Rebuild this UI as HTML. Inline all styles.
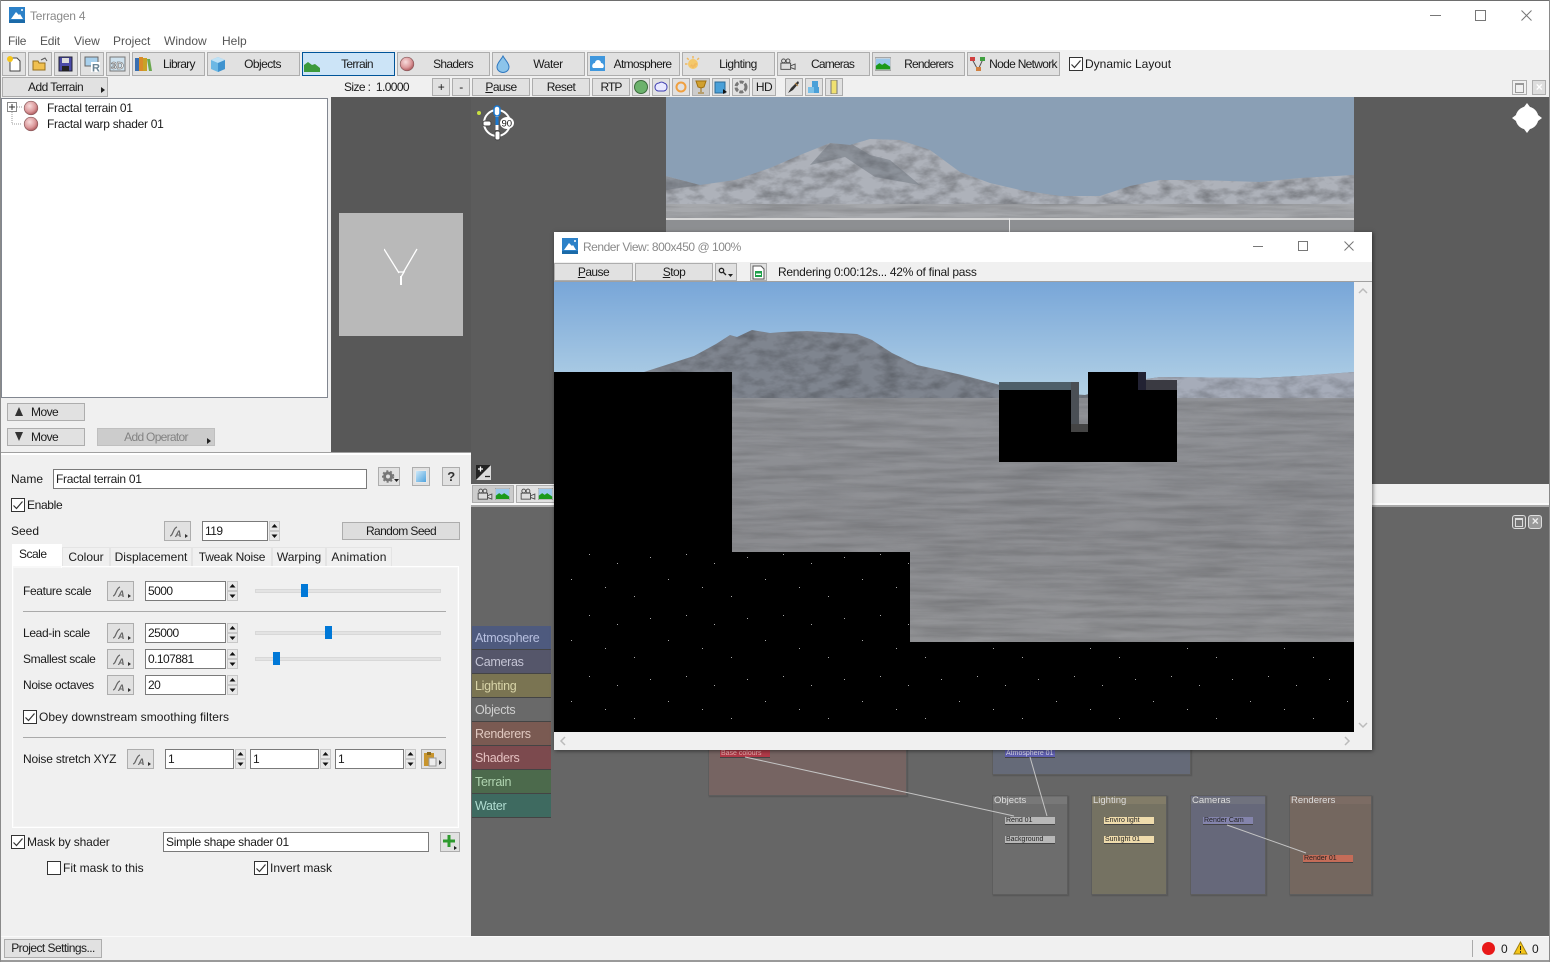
<!DOCTYPE html>
<html><head><meta charset="utf-8"><style>
html,body{margin:0;padding:0;width:1550px;height:962px;overflow:hidden;background:#f0f0f0}
body{position:relative;font-family:"Liberation Sans",sans-serif;font-size:12px;color:#1a1a1a}
div,span,svg{position:absolute}
u{position:static}
.t{white-space:nowrap;line-height:16px}
.lb{letter-spacing:-.35px}
.m{color:#555}
.b{box-sizing:border-box;background:#e1e1e1;border:1px solid #adadad;text-align:center;white-space:nowrap;overflow:hidden;letter-spacing:-.55px}
.i{box-sizing:border-box;background:#fff;border:1px solid #7a7a7a;padding:0 2px;line-height:18px;white-space:nowrap;letter-spacing:-.55px}
.c{box-sizing:border-box;width:14px;height:14px;background:#fff;border:1px solid #333}
.sl{height:4px;background:#e3e3e3;border:1px solid #d8d8d8;box-sizing:border-box}
.th{width:7px;height:13px;background:#0078d7}
.tab{box-sizing:border-box;top:547px;height:20px;background:#f0f0f0;border:1px solid #e4e4e4;border-bottom:0;text-align:center;line-height:18px}
.nl{left:472px;width:79px;height:24px;line-height:24px;font-size:12.5px;text-indent:3px;letter-spacing:-.3px;box-shadow:inset 0 -1px 0 #444}
.g{box-sizing:border-box;border:1px solid #5d5d5d;box-shadow:1px 1px 1px #555}
.gt{left:0;right:0;top:0;height:7px;color:#ddd;font-size:9.5px;line-height:7px;text-indent:1px}
.n{height:7px;width:50px;font-size:7px;line-height:7px;color:#222;text-indent:1px;box-shadow:0 1px 0 #444;white-space:nowrap;overflow:hidden}
</style></head><body>
<svg width="0" height="0" style="left:0;top:0">
<defs>
<radialGradient id="pk" cx=".4" cy=".35" r=".7"><stop offset="0" stop-color="#f8dcdc"/><stop offset=".6" stop-color="#dc9a9c"/><stop offset="1" stop-color="#a85055"/></radialGradient>
<linearGradient id="ic" x1="0" y1="0" x2="1" y2="1"><stop offset="0" stop-color="#d4ecfa"/><stop offset="1" stop-color="#4aa0dc"/></linearGradient>
<symbol id="sp" viewBox="0 0 16 16"><circle cx="8" cy="8" r="6.800" fill="url(#pk)" stroke="#8a5a5c" stroke-width=".7"/></symbol>
<symbol id="fa" viewBox="0 0 27 20"><path d="M6 15c3 0 3-8 7-9" fill="none" stroke="#666" stroke-width="1.200"/><text x="11" y="16" font-family="Liberation Sans" font-size="9" font-style="italic" font-weight="bold" fill="#666">A</text><path d="M21 13l3 2-3 2z" fill="#333"/></symbol>
<symbol id="spn" viewBox="0 0 11 20"><rect x=".5" y=".5" width="10" height="9" fill="#e8e8e8" stroke="#c8c8c8"/><rect x=".5" y="10.500" width="10" height="9" fill="#e8e8e8" stroke="#c8c8c8"/><path d="M5.500 3l3 3.500h-6zM5.500 17l3-3.500h-6z" fill="#111"/></symbol>
<symbol id="chk" viewBox="0 0 14 14"><path d="M2.500 7.500l3 3 6-7" fill="none" stroke="#333" stroke-width="1.200"/></symbol>
<symbol id="land" viewBox="0 0 18 14"><rect width="18" height="14" fill="#fff" stroke="#888"/><rect x="1" y="1" width="16" height="12" fill="#9cc9ec"/><path d="M1 13V9l4-3 3 2 3-2 6 4v3z" fill="#1b9a1b"/></symbol>
<symbol id="cam" viewBox="0 0 18 14"><rect x="1" y="6" width="11" height="7" fill="#ddd" stroke="#444"/><circle cx="4" cy="3.500" r="2.200" fill="#ddd" stroke="#444"/><circle cx="9" cy="3.500" r="2.200" fill="#ddd" stroke="#444"/><path d="M12 9l5-2v6l-5-2z" fill="#ddd" stroke="#444"/></symbol>
<symbol id="logo" viewBox="0 0 16 16"><rect width="16" height="16" fill="#2c81c8"/><path d="M2 12l5-7 3 3 1-1 3 5z" fill="#fff"/><circle cx="13" cy="3" r="1" fill="#fff"/><rect y="13" width="16" height="3" fill="#1b6aa8"/></symbol>
<filter id="nz" x="0" y="0" width="100%" height="100%"><feTurbulence type="fractalNoise" baseFrequency="0.012 0.16" numOctaves="5" seed="5"/><feColorMatrix values="0 0 0 0 0 0 0 0 0 0 0 0 0 0 0 1.800 0 0 0 -.6"/></filter>
<filter id="nm" x="0" y="0" width="100%" height="100%"><feTurbulence type="fractalNoise" baseFrequency="0.05 0.1" numOctaves="4" seed="9"/><feColorMatrix values="0 0 0 0 0 0 0 0 0 0 0 0 0 0 0 2.200 0 0 0 -.85"/></filter>
<filter id="nw" x="0" y="0" width="100%" height="100%"><feTurbulence type="fractalNoise" baseFrequency="0.02 0.08" numOctaves="4" seed="3"/><feColorMatrix values="0 0 0 0 1 0 0 0 0 1 0 0 0 0 1 2 0 0 0 -.8"/></filter>
<linearGradient id="sky" x1="0" y1="0" x2="0" y2="1"><stop offset="0" stop-color="#78a6d8"/><stop offset="1" stop-color="#bcd8e8"/></linearGradient>
<linearGradient id="gr" x1="0" y1="0" x2="0" y2="1"><stop offset="0" stop-color="#8f9196"/><stop offset=".4" stop-color="#8b8c90"/><stop offset="1" stop-color="#949597"/></linearGradient>
<pattern id="st" width="97" height="61" patternUnits="userSpaceOnUse"><g fill="#a8a8a8"><rect x="7" y="5" width="1" height="1"/><rect x="35" y="14" width="1" height="1"/><rect x="68" y="8" width="1" height="1"/><rect x="86" y="30" width="1" height="1"/><rect x="23" y="38" width="1" height="1"/><rect x="52" y="47" width="1" height="1"/></g></pattern>
<clipPath id="mt"><path d="M554 372L614 376 644 372 669 364 694 356 716 344 730 335 737 337 752 330 770 333 782 332 807 331 857 334 872 340 892 353 917 365 962 375 1000 385 1040 392 1085 395 1140 380 1160 377 1260 378 1300 376 1354 372V410H554z"/></clipPath>
<clipPath id="mtp"><path d="M666 176L700 185 735 180 770 168 800 155 830 143 850 145 870 139 900 140 930 150 960 172 990 183 1020 190 1060 196 1100 196 1130 186 1160 180 1200 180 1260 182 1300 178 1354 175V218H666z"/></clipPath>
</defs></svg>

<!-- title & menu -->
<div style="left:0;top:0;width:1550px;height:50px;background:#fff"></div>
<svg style="left:9px;top:7px" width="16" height="16"><use href="#logo"/></svg>
<div class="t" style="left:30px;top:8px;color:#8a8a8a;letter-spacing:-.2px">Terragen 4</div>
<div class="t m" style="left:8px;top:33px;letter-spacing:-.3px">File</div>
<div class="t m" style="left:40px;top:33px;letter-spacing:-.2px">Edit</div>
<div class="t m" style="left:74px;top:33px">View</div>
<div class="t m" style="left:113px;top:33px">Project</div>
<div class="t m" style="left:164px;top:33px">Window</div>
<div class="t m" style="left:222px;top:33px">Help</div>
<svg style="left:1425px;top:6px" width="115" height="20" fill="none" stroke="#777"><path d="M5 9.500h11M50.500 4.500h10v10h-10zM96.500 4.500l10 10M106.500 4.500l-10 10"/></svg>

<!-- toolbar 1 -->
<div class="b" style="left:2px;top:52px;width:24px;height:24px"></div>
<svg style="left:6px;top:56px" width="16" height="16"><path d="M4 2h7l3 3v10H4z" fill="#fff" stroke="#444"/><circle cx="4" cy="3" r="3" fill="#f5c518"/></svg>
<div class="b" style="left:28px;top:52px;width:24px;height:24px"></div>
<svg style="left:32px;top:57px" width="16" height="15"><path d="M1 4h5l1 2h6v7H1z" fill="#f0c050" stroke="#97701c"/><path d="M9 3l4-2 2 3" fill="none" stroke="#555"/></svg>
<div class="b" style="left:54px;top:52px;width:24px;height:24px"></div>
<svg style="left:58px;top:56px" width="17" height="17"><path d="M1 1h13v14H1z" fill="#4a4aa8" stroke="#223"/><rect x="4" y="2" width="7" height="5" fill="#ddd"/><rect x="4" y="10" width="7" height="5" fill="#222"/></svg>
<div class="b" style="left:80px;top:52px;width:24px;height:24px"></div>
<svg style="left:84px;top:56px" width="17" height="17"><rect x="1" y="1" width="13" height="9" fill="#a8d0ec" stroke="#666"/><rect x="7" y="6" width="9" height="10" fill="#fff"/><text x="8" y="15.500" font-family="Liberation Sans" font-size="11" font-weight="bold" fill="#6a8494">R</text></svg>
<div class="b" style="left:106px;top:52px;width:24px;height:24px"></div>
<svg style="left:109px;top:56px" width="18" height="17"><rect x="1" y="1" width="15" height="14" fill="#cfe2ee" stroke="#777"/><text x="2" y="13" font-family="Liberation Sans" font-size="10" font-weight="bold" fill="#fff" stroke="#555" stroke-width=".5">3D</text></svg>
<div class="b" style="left:132px;top:52px;width:73px;height:24px;text-align:left;padding-left:30px;line-height:22px;letter-spacing:-.7px">Library</div>
<svg style="left:135px;top:57px" width="17" height="15"><rect x="0" y="1" width="4" height="13" fill="#3a6fb0"/><rect x="4" y="0" width="4" height="14" fill="#d98b2b"/><rect x="8" y="1" width="4" height="13" fill="#c9a227"/><path d="M12 2l3 0 2 12h-3z" fill="#6aa84f"/></svg>
<div class="b" style="left:207px;top:52px;width:93px;height:24px;padding-left:18px;line-height:22px">Objects</div>
<svg style="left:209px;top:56px" width="17" height="17"><path d="M2 4l7-3 7 3v9l-7 3-7-3z" fill="#6cb8e4"/><path d="M2 4l7 3 7-3-7-3z" fill="#bfe2f6"/><path d="M9 7v9l7-3V4z" fill="#3f93cf"/></svg>
<div class="b" style="left:302px;top:52px;width:93px;height:24px;padding-left:17px;line-height:22px;background:#cce4f7;border-color:#005499;letter-spacing:-.7px">Terrain</div>
<svg style="left:304px;top:60px" width="16" height="12"><path d="M0 12V5l4-3 4 3 3-1 5 4v4z" fill="#3c9a3c"/></svg>
<div class="b" style="left:397px;top:52px;width:93px;height:24px;padding-left:19px;line-height:22px;letter-spacing:-.7px">Shaders</div>
<svg style="left:399px;top:56px" width="16" height="16"><use href="#sp"/></svg>
<div class="b" style="left:492px;top:52px;width:93px;height:24px;padding-left:19px;line-height:22px;letter-spacing:-.4px">Water</div>
<svg style="left:496px;top:55px" width="14" height="18"><path d="M7 1c2 4 6 7 6 11a6 5.500 0 0 1-12 0c0-4 4-7 6-11z" fill="#8cc4ea" stroke="#2f78c0"/></svg>
<div class="b" style="left:587px;top:52px;width:93px;height:24px;padding-left:18px;line-height:22px;letter-spacing:-.7px">Atmosphere</div>
<svg style="left:590px;top:56px" width="15" height="15"><rect width="15" height="15" fill="#3f97dd"/><path d="M3 12a3 3 0 0 1 2-5 3 3 0 0 1 6 0 3 3 0 0 1 2 5z" fill="#fff"/></svg>
<div class="b" style="left:682px;top:52px;width:93px;height:24px;padding-left:19px;line-height:22px">Lighting</div>
<svg style="left:685px;top:56px" width="16" height="16"><circle cx="8" cy="8" r="5" fill="#f4c86a"/><path d="M8 0v16M0 8h16M2 2l12 12M14 2L2 14" stroke="#f0b860" stroke-dasharray="2.500 7" stroke-width="1.500"/></svg>
<div class="b" style="left:777px;top:52px;width:93px;height:24px;padding-left:18px;line-height:22px;letter-spacing:-.8px">Cameras</div>
<svg style="left:780px;top:57px" width="16" height="14"><use href="#cam"/></svg>
<div class="b" style="left:872px;top:52px;width:93px;height:24px;padding-left:20px;line-height:22px;letter-spacing:-.8px">Renderers</div>
<svg style="left:875px;top:57px" width="16" height="14"><use href="#land"/></svg>
<div class="b" style="left:967px;top:52px;width:93px;height:24px;padding-left:19px;line-height:22px;letter-spacing:-.7px">Node Network</div>
<svg style="left:970px;top:57px" width="15" height="15"><path d="M2 2l6 11L13 2" fill="none" stroke="#555"/><rect x="0" y="0" width="5" height="4" fill="#d04040"/><rect x="10" y="0" width="5" height="4" fill="#40a040"/><rect x="6" y="10" width="5" height="4" fill="#d08040"/></svg>
<div class="c" style="left:1069px;top:57px"></div><svg style="left:1069px;top:57px" width="14" height="14"><use href="#chk"/></svg>
<div class="t" style="left:1085px;top:56px">Dynamic Layout</div>

<!-- toolbar 2 -->
<div class="b" style="left:2px;top:77px;width:106px;height:20px;line-height:18px;text-align:left;padding-left:25px">Add Terrain</div>
<svg style="left:101px;top:87px" width="6" height="7"><path d="M0 0l4 3-4 3z" fill="#222"/></svg>
<div class="t" style="left:344px;top:79px;letter-spacing:-.6px">Size :&nbsp; 1.0000</div>
<div class="b" style="left:432px;top:78px;width:18px;height:18px;line-height:16px">+</div>
<div class="b" style="left:452px;top:78px;width:18px;height:18px;line-height:16px">-</div>
<div class="b" style="left:472px;top:78px;width:58px;height:18px;line-height:16px"><u>P</u>ause</div>
<div class="b" style="left:532px;top:78px;width:58px;height:18px;line-height:16px">Reset</div>
<div class="b" style="left:592px;top:78px;width:38px;height:18px;line-height:16px;letter-spacing:-.9px">RTP</div>
<div class="b" style="left:632px;top:78px;width:18px;height:18px"></div><svg style="left:634px;top:80px" width="14" height="14"><circle cx="7" cy="7" r="6.500" fill="#6cb26c" stroke="#3c6c3c"/></svg>
<div class="b" style="left:652px;top:78px;width:18px;height:18px"></div><svg style="left:653px;top:81px" width="16" height="12"><path d="M2 6a4 4 0 0 1 4-4 4 4 0 0 1 5 0 4 4 0 0 1 3 4 4 4 0 0 1-3 4H5a4 4 0 0 1-3-4z" fill="#e8e8ff" stroke="#3a3ab0"/></svg>
<div class="b" style="left:672px;top:78px;width:18px;height:18px"></div><svg style="left:674px;top:80px" width="14" height="14"><circle cx="7" cy="7" r="4.500" fill="none" stroke="#f0a040" stroke-width="2"/></svg>
<div class="b" style="left:692px;top:78px;width:18px;height:18px;background:#ccc"></div><svg style="left:695px;top:80px" width="12" height="14"><path d="M1 1h10l-2 6-3 1-3-1zM6 8v4M3 13h6" fill="#d0a030" stroke="#a07010"/></svg>
<div class="b" style="left:712px;top:78px;width:18px;height:18px"></div><svg style="left:714px;top:80px" width="14" height="14"><rect x="1" y="2" width="10" height="11" fill="#4aa0d8" stroke="#2a6a98"/><path d="M9 9l4 3-4 2z" fill="#111"/></svg>
<div class="b" style="left:732px;top:78px;width:18px;height:18px"></div><svg style="left:734px;top:80px" width="14" height="14"><circle cx="7" cy="7" r="5" fill="none" stroke="#777" stroke-width="3" stroke-dasharray="4 1.500"/></svg>
<div class="b" style="left:752px;top:78px;width:24px;height:18px;line-height:16px">HD</div>
<div class="b" style="left:785px;top:78px;width:18px;height:18px"></div><svg style="left:787px;top:80px" width="14" height="14"><path d="M1 13l3-5 7-7 1 2-6 7z" fill="#333"/><path d="M8 3l3 3" stroke="#c09050"/></svg>
<div class="b" style="left:805px;top:78px;width:18px;height:18px"></div><svg style="left:807px;top:80px" width="14" height="14"><rect x="5" y="1" width="6" height="6" fill="#4aa0d8"/><rect x="1" y="7" width="6" height="6" fill="#7ac0e8"/><rect x="7" y="7" width="5" height="6" fill="#4aa0d8"/></svg>
<div class="b" style="left:825px;top:78px;width:18px;height:18px"></div><svg style="left:830px;top:80px" width="8" height="14"><rect x="1" y="0" width="6" height="14" fill="#f0e070" stroke="#777"/></svg>

<!-- main dark areas -->
<div style="left:331px;top:97px;width:1219px;height:388px;background:#5c5c5c"></div>
<div style="left:331px;top:97px;width:140px;height:355px;background:#585858"></div>

<!-- top preview terrain -->
<svg style="left:666px;top:97px" width="688" height="135" viewBox="666 97 688 135">
<rect x="666" y="97" width="688" height="135" fill="#8a9fb5"/>
<path d="M666 176L700 185 735 180 770 168 800 155 830 143 850 145 870 139 900 140 930 150 960 172 990 183 1020 190 1060 196 1100 196 1130 186 1160 180 1200 180 1260 182 1300 178 1354 175V218H666z" fill="#aeb2ba"/>
<g clip-path="url(#mtp)">
<rect x="666" y="97" width="688" height="121" filter="url(#nm)" opacity=".28"/>
<path d="M830 143l-20 22 35-8 30 20 45 8-30-25-20-5-20-12zM666 176l34 9-34 5z" fill="#666c76" opacity=".45"/>
<rect x="666" y="204" width="688" height="14" fill="#a6a8ac"/>
<rect x="666" y="204" width="688" height="14" filter="url(#nz)" opacity=".2"/>
</g>
<rect x="666" y="218" width="688" height="2" fill="#d8d8d8"/>
<rect x="666" y="220" width="688" height="12" fill="#8d8f92"/>
<rect x="1009" y="218" width="1" height="14" fill="#e8e8e8"/>
</svg>

<!-- thumbnail -->
<div style="left:339px;top:213px;width:124px;height:123px;background:#b9b9b9"></div>
<svg style="left:384px;top:248px" width="36" height="38" fill="none" stroke="#fff"><path d="M0 1l15 24M33 1L19 25M14 24h6l-3 5" stroke-width="1.300"/><path d="M17 28v9" stroke-width="2"/></svg>

<!-- compass -->
<svg style="left:474px;top:104px" width="42" height="38">
<circle cx="5" cy="9" r="2" fill="#c8e040"/>
<circle cx="23" cy="19" r="13" fill="none" stroke="#fff" stroke-width="2"/>
<path d="M23 8v18" stroke="#fff" stroke-width="3"/>
<rect x="20" y="2" width="6" height="10" rx="3" fill="#fff" stroke="#1a78d0" stroke-width="1.500"/>
<rect x="21.500" y="13" width="3" height="8" fill="#1a78d0"/>
<rect x="9" y="17" width="8" height="5" rx="2" fill="#fff" stroke="#444"/>
<rect x="21" y="27" width="5" height="9" rx="2" fill="#fff" stroke="#444"/>
<ellipse cx="33" cy="19" rx="7" ry="6" fill="#fff"/>
<text x="27.500" y="22.500" font-family="Liberation Sans" font-size="9.500" fill="#111">90</text>
</svg>
<svg style="left:1512px;top:103px" width="30" height="30">
<circle cx="15" cy="15" r="11.500" fill="#fff"/><path d="M15 0l3 4h-6zM15 30l3-4h-6zM0 15l4-3v6zM30 15l-4-3v6z" fill="#fff"/>
</svg>
<!-- small maximize/close -->
<div class="b" style="left:1512px;top:80px;width:15px;height:15px;background:#f0f0f0"><div style="left:2px;top:2px;width:7px;height:7px;border:1px solid #999;border-top-width:2px"></div></div>
<div class="b" style="left:1532px;top:80px;width:14px;height:15px;background:#ddd;color:#fff;font-size:12px;font-weight:bold;line-height:13px">×</div>

<!-- tree panel -->
<div style="left:1px;top:97px;width:330px;height:355px;background:#f0f0f0"></div>
<div style="box-sizing:border-box;left:1px;top:98px;width:327px;height:300px;background:#fff;border:1px solid #828790"></div>
<svg style="left:7px;top:102px" width="22" height="24" fill="none"><rect x=".5" y=".5" width="9" height="9" fill="#fff" stroke="#888"/><path d="M2 5h6M5 2v6" stroke="#333"/><path d="M5 10v12h10M10 5h5" stroke="#999" stroke-dasharray="1 1"/></svg>
<svg style="left:23px;top:100px" width="16" height="16"><use href="#sp"/></svg>
<svg style="left:23px;top:116px" width="16" height="16"><use href="#sp"/></svg>
<div class="t" style="left:47px;top:100px;letter-spacing:-.28px">Fractal terrain 01</div>
<div class="t" style="left:47px;top:116px;letter-spacing:-.28px">Fractal warp shader 01</div>
<div class="b" style="left:7px;top:403px;width:78px;height:18px;text-align:left;padding-left:23px;line-height:16px">Move</div>
<svg style="left:15px;top:407px" width="8" height="9"><path d="M4 0l4 9H0z" fill="#333"/></svg>
<div class="b" style="left:7px;top:428px;width:78px;height:18px;text-align:left;padding-left:23px;line-height:16px">Move</div>
<svg style="left:15px;top:432px" width="8" height="9"><path d="M4 9l4-9H0z" fill="#333"/></svg>
<div class="b" style="left:97px;top:428px;width:118px;height:18px;background:#ccc;border-color:#bfbfbf;color:#838383;line-height:16px;letter-spacing:-.7px">Add Operator</div>
<svg style="left:207px;top:438px" width="6" height="7"><path d="M0 0l4 3-4 3z" fill="#222"/></svg>

<!-- strip -->
<div style="left:471px;top:484px;width:1079px;height:21px;background:#f0f0f0"></div>
<div style="left:471px;top:505px;width:1079px;height:2px;background:#a9a9a9"></div>
<div style="left:471px;top:503px;width:1079px;height:2px;background:#fafafa"></div>
<div style="left:471px;top:507px;width:1079px;height:429px;background:#666"></div>
<svg style="left:476px;top:465px" width="15" height="15"><rect width="15" height="15" fill="#222"/><path d="M15 0L0 15h15z" fill="#f0f0f0" opacity=".9"/><path d="M2 4h5M4.500 1.500v5" stroke="#fff" stroke-width="1.300"/><path d="M9 11.500h5" stroke="#222" stroke-width="1.300"/></svg>
<div class="b" style="left:472px;top:485px;width:42px;height:18px;background:#ccc"></div>
<svg style="left:477px;top:488px" width="16" height="12"><use href="#cam"/></svg><svg style="left:495px;top:488px" width="15" height="12"><use href="#land"/></svg>
<div class="b" style="left:516px;top:485px;width:40px;height:18px"></div>
<svg style="left:520px;top:488px" width="16" height="12"><use href="#cam"/></svg><svg style="left:538px;top:488px" width="15" height="12"><use href="#land"/></svg>
<div class="b" style="left:1512px;top:515px;width:14px;height:14px;background:#777;border-color:#ddd;border-radius:3px"><div style="left:2px;top:2px;width:6px;height:6px;border:1px solid #ddd;border-top-width:2px"></div></div>
<div class="b" style="left:1528px;top:515px;width:14px;height:14px;background:#999;border-color:#ddd;border-radius:3px;color:#eee;line-height:11px;font-weight:bold">×</div>

<!-- node network -->
<div class="g" style="left:708px;top:740px;width:199px;height:56px;background:#766462"></div>
<div class="g" style="left:992px;top:740px;width:199px;height:35px;background:#656a78"></div>
<div class="g" style="left:992px;top:795px;width:76px;height:100px;background:#6d6d6d"><div class="gt" style="background:#787878;top:1px">Objects</div></div>
<div class="g" style="left:1091px;top:795px;width:76px;height:100px;background:#757262"><div class="gt" style="background:#827c68;top:1px">Lighting</div></div>
<div class="g" style="left:1190px;top:795px;width:76px;height:100px;background:#66687a"><div class="gt" style="background:#70727e;top:1px">Cameras</div></div>
<div class="g" style="left:1289px;top:795px;width:83px;height:100px;background:#74675f"><div class="gt" style="background:#7c6c64;top:1px">Renderers</div></div>
<div class="n" style="left:720px;top:750px;background:#b03a48;color:#e8b0b0">Base colours</div>
<div class="n" style="left:1005px;top:750px;background:#6060b0;color:#dde">Atmosphere 01</div>
<div class="n" style="left:1005px;top:817px;background:#b8b8b8">Rend 01</div>
<div class="n" style="left:1005px;top:836px;background:#b8b8b8">Background</div>
<div class="n" style="left:1104px;top:817px;background:#efdcac">Enviro light</div>
<div class="n" style="left:1104px;top:836px;background:#efdcac">Sunlight 01</div>
<div class="n" style="left:1203px;top:817px;background:#8484ac">Render Cam</div>
<div class="n" style="left:1303px;top:855px;background:#c46c58">Render 01</div>
<svg style="left:700px;top:745px" width="680" height="130" fill="none" stroke="#c4c4c4"><path d="M45 12L314 71M330 12L347 71M527 80L606 108"/></svg>

<!-- node list -->
<div class="nl" style="top:626px;background:#4e5a7e;color:#b8c0e0">Atmosphere</div>
<div class="nl" style="top:650px;background:#55566a;color:#c4c4d4">Cameras</div>
<div class="nl" style="top:674px;background:#7a7452;color:#d8d4a8">Lighting</div>
<div class="nl" style="top:698px;background:#696969;color:#cfcfcf">Objects</div>
<div class="nl" style="top:722px;background:#7a5a52;color:#e0c8c0">Renderers</div>
<div class="nl" style="top:746px;background:#7c4a4e;color:#e4c0c0">Shaders</div>
<div class="nl" style="top:770px;background:#4c6a4c;color:#b0d4b0">Terrain</div>
<div class="nl" style="top:794px;background:#3e6a60;color:#b0dcd0">Water</div>

<!-- settings panel -->
<div style="left:1px;top:452px;width:470px;height:484px;background:#f0f0f0"></div>
<div style="left:1px;top:452px;width:470px;height:1px;background:#a0a0a0"></div>
<div style="left:1px;top:453px;width:470px;height:2px;background:#fff"></div>
<div class="t" style="left:11px;top:471px">Name</div>
<div class="i" style="left:53px;top:469px;width:314px;height:20px;letter-spacing:-.28px">Fractal terrain 01</div>
<div class="b" style="left:378px;top:467px;width:22px;height:19px"></div>
<svg style="left:382px;top:470px" width="17" height="14"><circle cx="6" cy="6.500" r="3.500" fill="none" stroke="#777" stroke-width="3"/><circle cx="6" cy="6.500" r="5.500" fill="none" stroke="#777" stroke-width="1.500" stroke-dasharray="2 2"/><path d="M12 9h5l-2.500 3z" fill="#222"/></svg>
<div class="b" style="left:412px;top:467px;width:18px;height:19px"></div>
<svg style="left:415px;top:470px" width="12" height="13"><rect x=".5" y=".5" width="11" height="12" fill="url(#ic)" stroke="#e8e8e8"/></svg>
<div class="b" style="left:442px;top:467px;width:18px;height:19px;font-weight:bold;font-size:13px;line-height:17px;color:#333">?</div>
<div class="c" style="left:11px;top:498px"></div><svg style="left:11px;top:498px" width="14" height="14"><use href="#chk"/></svg>
<div class="t lb" style="left:27px;top:497px">Enable</div>
<div class="t" style="left:11px;top:523px">Seed</div>
<div class="b" style="left:164px;top:521px;width:27px;height:20px"><svg style="left:-1px;top:-1px" width="27" height="20"><use href="#fa"/></svg></div>
<div class="i" style="left:202px;top:521px;width:66px;height:20px">119</div>
<svg style="left:269px;top:521px" width="11" height="20"><use href="#spn"/></svg>
<div class="b" style="left:342px;top:522px;width:118px;height:18px;line-height:16px;background:#ddd;letter-spacing:-.6px">Random Seed</div>

<div class="tab" style="left:62px;width:48px">Colour</div>
<div class="tab" style="left:110px;width:82px">Displacement</div>
<div class="tab" style="left:192px;width:80px;letter-spacing:-.2px">Tweak Noise</div>
<div class="tab" style="left:272px;width:54px">Warping</div>
<div class="tab" style="left:326px;width:66px;letter-spacing:.2px">Animation</div>
<div style="box-sizing:border-box;left:12px;top:566px;width:447px;height:262px;background:#f0f0f0;border:1px solid #fff;box-shadow:inset 0 0 0 1px #f4f4f4"></div>
<div class="tab" style="left:12px;top:544px;width:50px;height:24px;background:#fff;border:0;line-height:21px;text-align:left;padding-left:7px;letter-spacing:-.5px">Scale</div>
<div style="left:13px;top:566px;width:48px;height:2px;background:#f8f8f8"></div>

<!-- rows -->
<div class="t lb" style="left:23px;top:583px">Feature scale</div>
<div class="b" style="left:107px;top:581px;width:27px;height:20px"><svg style="left:-1px;top:-1px" width="27" height="20"><use href="#fa"/></svg></div>
<div class="i" style="left:145px;top:581px;width:81px;height:20px">5000</div>
<svg style="left:227px;top:581px" width="11" height="20"><use href="#spn"/></svg>
<div class="sl" style="left:255px;top:589px;width:186px"></div><div class="th" style="left:301px;top:584px"></div>
<div style="left:23px;top:611px;width:423px;height:1px;background:#aaa"></div>

<div class="t lb" style="left:23px;top:625px">Lead-in scale</div>
<div class="b" style="left:107px;top:623px;width:27px;height:20px"><svg style="left:-1px;top:-1px" width="27" height="20"><use href="#fa"/></svg></div>
<div class="i" style="left:145px;top:623px;width:81px;height:20px">25000</div>
<svg style="left:227px;top:623px" width="11" height="20"><use href="#spn"/></svg>
<div class="sl" style="left:255px;top:631px;width:186px"></div><div class="th" style="left:325px;top:626px"></div>

<div class="t lb" style="left:23px;top:651px">Smallest scale</div>
<div class="b" style="left:107px;top:649px;width:27px;height:20px"><svg style="left:-1px;top:-1px" width="27" height="20"><use href="#fa"/></svg></div>
<div class="i" style="left:145px;top:649px;width:81px;height:20px">0.107881</div>
<svg style="left:227px;top:649px" width="11" height="20"><use href="#spn"/></svg>
<div class="sl" style="left:255px;top:657px;width:186px"></div><div class="th" style="left:273px;top:652px"></div>

<div class="t lb" style="left:23px;top:677px">Noise octaves</div>
<div class="b" style="left:107px;top:675px;width:27px;height:20px"><svg style="left:-1px;top:-1px" width="27" height="20"><use href="#fa"/></svg></div>
<div class="i" style="left:145px;top:675px;width:81px;height:20px">20</div>
<svg style="left:227px;top:675px" width="11" height="20"><use href="#spn"/></svg>

<div class="c" style="left:23px;top:710px"></div><svg style="left:23px;top:710px" width="14" height="14"><use href="#chk"/></svg>
<div class="t" style="left:39px;top:709px;letter-spacing:.06px">Obey downstream smoothing filters</div>
<div style="left:23px;top:737px;width:423px;height:1px;background:#aaa"></div>

<div class="t" style="left:23px;top:751px;letter-spacing:-.2px">Noise stretch XYZ</div>
<div class="b" style="left:127px;top:749px;width:27px;height:20px"><svg style="left:-1px;top:-1px" width="27" height="20"><use href="#fa"/></svg></div>
<div class="i" style="left:165px;top:749px;width:69px;height:20px">1</div>
<svg style="left:235px;top:749px" width="11" height="20"><use href="#spn"/></svg>
<div class="i" style="left:250px;top:749px;width:69px;height:20px">1</div>
<svg style="left:320px;top:749px" width="11" height="20"><use href="#spn"/></svg>
<div class="i" style="left:335px;top:749px;width:69px;height:20px">1</div>
<svg style="left:405px;top:749px" width="11" height="20"><use href="#spn"/></svg>
<div class="b" style="left:421px;top:749px;width:25px;height:20px"></div>
<svg style="left:424px;top:752px" width="20" height="15"><rect x="0" y="1" width="10" height="13" fill="#c8952e"/><rect x="3" y="0" width="4" height="3" fill="#8a6a20"/><rect x="5" y="6" width="7" height="8" fill="#eee" stroke="#999"/><path d="M15 8l3 2.500-3 2.500z" fill="#333"/></svg>

<div class="c" style="left:11px;top:835px"></div><svg style="left:11px;top:835px" width="14" height="14"><use href="#chk"/></svg>
<div class="t" style="left:27px;top:834px;letter-spacing:-.15px">Mask by shader</div>
<div class="i" style="left:163px;top:832px;width:266px;height:20px;letter-spacing:-.3px">Simple shape shader 01</div>
<div class="b" style="left:440px;top:832px;width:20px;height:20px"></div>
<svg style="left:443px;top:835px" width="15" height="15"><path d="M4.500 0h3v4.500H12v3H7.500V12h-3V7.500H0v-3h4.500z" fill="#2e9a2e"/><path d="M11 11l3 2-3 2z" fill="#222"/></svg>
<div class="c" style="left:47px;top:861px"></div>
<div class="t" style="left:63px;top:860px">Fit mask to this</div>
<div class="c" style="left:254px;top:861px"></div><svg style="left:254px;top:861px" width="14" height="14"><use href="#chk"/></svg>
<div class="t" style="left:270px;top:860px">Invert mask</div>

<!-- status bar -->
<div style="left:0;top:936px;width:1550px;height:26px;background:#f0f0f0"></div>
<div style="left:0;top:936px;width:1550px;height:1px;background:#fafafa"></div>
<div class="b" style="left:4px;top:939px;width:98px;height:19px;line-height:17px">Project Settings...</div>
<div style="left:1472px;top:940px;width:1px;height:17px;background:#aaa"></div>
<svg style="left:1481px;top:941px" width="15" height="15"><circle cx="7.500" cy="7.500" r="6.500" fill="#e81818"/></svg>
<div class="t" style="left:1501px;top:941px">0</div>
<svg style="left:1513px;top:941px" width="15" height="14"><path d="M7.500 1L14 13H1z" fill="#f5c518" stroke="#a08010"/><path d="M7.500 5v4M7.500 10v2" stroke="#222"/></svg>
<div class="t" style="left:1532px;top:941px">0</div>
<div style="left:0;top:960px;width:1550px;height:2px;background:#9a9a9a"></div>

<!-- window borders -->
<div style="left:0;top:0;width:1550px;height:1px;background:#6e6e6e"></div>
<div style="left:0;top:0;width:1px;height:962px;background:#8a8a8a"></div>
<div style="left:1549px;top:0;width:1px;height:962px;background:#8a8a8a"></div>

<!-- render window -->
<div style="left:554px;top:232px;width:818px;height:518px;background:#f0f0f0;box-shadow:1px 1px 4px rgba(0,0,0,.5)"></div>
<div style="left:554px;top:232px;width:818px;height:30px;background:#fff"></div>
<svg style="left:562px;top:238px" width="16" height="16"><use href="#logo"/></svg>
<div class="t" style="left:583px;top:239px;color:#8a8a8a;letter-spacing:-.48px">Render View: 800x450 @ 100%</div>
<svg style="left:1248px;top:236px" width="112" height="20" fill="none" stroke="#777"><path d="M5 10.500h10M50.500 5.500h9v9h-9zM96.500 5.500l9 9M105.500 5.500l-9 9"/></svg>
<div class="b" style="left:554px;top:263px;width:79px;height:18px;line-height:16px"><u>P</u>ause</div>
<div class="b" style="left:635px;top:263px;width:78px;height:18px;line-height:16px"><u>S</u>top</div>
<div class="b" style="left:715px;top:263px;width:22px;height:18px"></div>
<svg style="left:718px;top:267px" width="16" height="11"><circle cx="3.500" cy="3.500" r="2.200" fill="none" stroke="#222" stroke-width="1.300"/><path d="M5 5l3 3" stroke="#222" stroke-width="1.300"/><path d="M10 7h5l-2.500 3z" fill="#222"/></svg>
<div class="b" style="left:750px;top:263px;width:17px;height:18px"></div>
<svg style="left:752px;top:265px" width="13" height="15"><path d="M1 1h8l3 3v10H1z" fill="#fff" stroke="#555"/><rect x="3" y="6" width="7" height="6" fill="#1fa04a"/><rect x="4" y="8.500" width="5" height="1.500" fill="#fff"/></svg>
<div class="t" style="left:778px;top:264px;letter-spacing:-.28px">Rendering 0:00:12s... 42% of final pass</div>
<div style="left:554px;top:281px;width:818px;height:1px;background:#a0a0a0"></div>

<svg style="left:554px;top:282px" width="800" height="450" viewBox="554 282 800 450">
<rect x="554" y="282" width="800" height="130" fill="url(#sky)"/>
<path d="M554 372L614 376 644 372 669 364 694 356 716 344 730 335 737 337 752 330 770 333 782 332 807 331 857 334 872 340 892 353 917 365 962 375 1000 385 1040 392 1085 395 1140 380 1160 377 1260 378 1300 376 1354 372V410H554z" fill="#7f858f"/>
<g clip-path="url(#mt)">
<rect x="554" y="282" width="800" height="130" filter="url(#nm)" opacity=".22"/>
<rect x="1120" y="370" width="234" height="40" fill="#a6acb9"/>
<rect x="1120" y="370" width="234" height="40" filter="url(#nm)" opacity=".2"/>
</g>
<rect x="554" y="398" width="800" height="334" fill="url(#gr)"/>
<rect x="554" y="398" width="800" height="334" filter="url(#nz)" opacity=".14"/>
<rect x="554" y="398" width="800" height="334" filter="url(#nw)" opacity=".05"/>
<rect x="554" y="372" width="178" height="360" fill="#000"/>
<rect x="554" y="552" width="356" height="180" fill="#000"/>
<rect x="554" y="642" width="800" height="90" fill="#000"/>
<rect x="999" y="382" width="80" height="8" fill="#4f5f69"/>
<rect x="1071" y="382" width="8" height="50" fill="#4a4f55"/>
<rect x="1071" y="424" width="17" height="8" fill="#444"/>
<rect x="1138" y="372" width="8" height="18" fill="#223"/>
<rect x="1146" y="380" width="31" height="10" fill="#3a3a42"/>
<rect x="999" y="390" width="72" height="72" fill="#000"/>
<rect x="1071" y="432" width="106" height="30" fill="#000"/>
<rect x="1088" y="372" width="50" height="90" fill="#000"/>
<rect x="1088" y="390" width="89" height="72" fill="#000"/>
<rect x="554" y="552" width="356" height="90" fill="url(#st)"/>
<rect x="554" y="642" width="800" height="90" fill="url(#st)"/>
</svg>
<svg style="left:1357px;top:286px" width="12" height="10" fill="none" stroke="#bbb" stroke-width="1.500"><path d="M2 7l4-4 4 4"/></svg>
<svg style="left:1357px;top:720px" width="12" height="10" fill="none" stroke="#bbb" stroke-width="1.500"><path d="M2 3l4 4 4-4"/></svg>
<svg style="left:558px;top:735px" width="10" height="12" fill="none" stroke="#bbb" stroke-width="1.500"><path d="M7 2L3 6l4 4"/></svg>
<svg style="left:1342px;top:735px" width="10" height="12" fill="none" stroke="#bbb" stroke-width="1.500"><path d="M3 2l4 4-4 4"/></svg>
</body></html>
